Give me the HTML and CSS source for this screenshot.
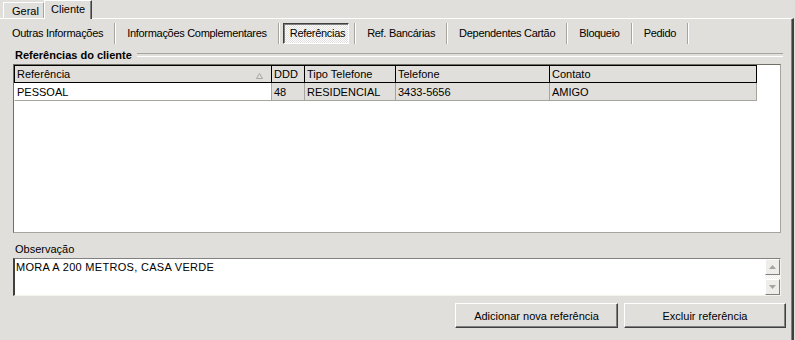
FILE: index.html
```html
<!DOCTYPE html>
<html lang="pt-BR">
<head>
    <meta charset="UTF-8">
    <title>Cliente - Referências</title>
    <link rel="stylesheet" href="styles.css">
</head>
<body>
    <div class="window">
        <div class="top-tabs">
            <div class="ttab">Geral</div>
            <div class="ttab active">Cliente</div>
        </div>

        <div class="page">
            <div class="sub-tabs">
                <div class="stab">Outras Informações</div>
                <span class="sep"></span>
                <div class="stab">Informações Complementares</div>
                <span class="sep"></span>
                <div class="stab selected">Referências</div>
                <span class="sep"></span>
                <div class="stab">Ref. Bancárias</div>
                <span class="sep"></span>
                <div class="stab">Dependentes Cartão</div>
                <span class="sep"></span>
                <div class="stab">Bloqueio</div>
                <span class="sep"></span>
                <div class="stab">Pedido</div>
                <span class="sep"></span>
            </div>

            <div class="group-title">Referências do cliente</div>

            <div class="grid">
                <table class="grid-table">
                    <thead>
                        <tr>
                            <th class="col-ref">
                                Referência
                                <svg class="sort-arrow" width="7" height="6" viewBox="0 0 7 6">
                                    <path d="M3.5 0.5 L6.5 5.5 L0.5 5.5 Z" fill="none" stroke="#a8a69e" stroke-width="1"/>
                                </svg>
                            </th>
                            <th class="col-ddd">DDD</th>
                            <th class="col-tipo">Tipo Telefone</th>
                            <th class="col-fone">Telefone</th>
                            <th class="col-contato">Contato</th>
                        </tr>
                    </thead>
                    <tbody>
                        <tr class="row-selected">
                            <td class="focused">PESSOAL</td>
                            <td>48</td>
                            <td>RESIDENCIAL</td>
                            <td>3433-5656</td>
                            <td>AMIGO</td>
                        </tr>
                    </tbody>
                </table>
            </div>

            <div class="field-label">Observação</div>
            <div class="memo">
                <div class="memo-text">MORA A 200 METROS, CASA VERDE</div>
                <div class="scrollbar">
                    <div class="scroll-btn">
                        <svg width="7" height="4" viewBox="0 0 7 4"><path d="M3.5 0 L7 4 L0 4 Z" fill="#a6a49c"/></svg>
                    </div>
                    <div class="scroll-btn">
                        <svg width="7" height="4" viewBox="0 0 7 4"><path d="M0 0 L7 0 L3.5 4 Z" fill="#a6a49c"/></svg>
                    </div>
                </div>
            </div>

            <div class="actions">
                <button class="btn btn-add">Adicionar nova referência</button>
                <button class="btn btn-del">Excluir referência</button>
            </div>
        </div>
    </div>
</body>
</html>
```

FILE: styles.css
```css
* {
    margin: 0;
    padding: 0;
    box-sizing: border-box;
}

body {
    font-family: "Liberation Sans", Arial, sans-serif;
    font-size: 11px;
    color: #000;
    background: #e0dfdb;
}

.window {
    width: 795px;
    height: 340px;
    background: #e0dfdb;
    overflow: hidden;
}

/* top page control */
.top-tabs {
    display: flex;
    height: 18px;
    padding-left: 3px;
    align-items: flex-end;
}

.ttab {
    height: 16px;
    line-height: 16px;
    width: 41px;
    padding-left: 8px;
    border-left: 1px solid #fff;
    border-top: 1px solid #fff;
    border-right: 1px solid #a6a49c;
}

.ttab.active {
    position: relative;
    z-index: 1;
    height: 19px;
    margin-bottom: -1px;
    line-height: 17px;
    width: 48px;
    padding-left: 6px;
    background: #e0dfdb;
    border-right: 1px solid #404040;
    box-shadow: inset -1px 0 0 #808080;
}

.page {
    height: 322px;
    border-top: 1px solid #fff;
    border-right: 2px solid #404040;
    box-shadow: inset -1px 0 0 #808080;
    width: 794px;
    padding-top: 3px;
}

/* flat button tabs */
.sub-tabs {
    display: flex;
    align-items: center;
    height: 22px;
    padding-left: 4px;
}

.stab {
    height: 21px;
    line-height: 19px;
    padding: 0 7px;
    border: 1px solid transparent;
    letter-spacing: -0.3px;
    white-space: nowrap;
}

.stab.selected {
    padding: 0 3px 0 6px;
    border-color: #404040 #fff #fff #404040;
    box-shadow: inset 1px 1px 0 #808080;
    background: repeating-conic-gradient(#fff 0 25%, #e0dfdb 0 50%) 0 0 / 2px 2px;
}

.sep {
    width: 2px;
    height: 21px;
    margin: 0 3px;
    border-left: 1px solid #a6a49c;
    border-right: 1px solid #fff;
}

.stab.selected + .sep {
    margin-left: 5px;
}

/* group box */
.group-title {
    display: flex;
    align-items: center;
    height: 14px;
    margin-top: 4px;
    padding: 0 9px 0 15px;
    font-weight: bold;
}

.group-title::after {
    content: "";
    flex: 1;
    height: 2px;
    margin-left: 5px;
    border-top: 1px solid #a6a49c;
    border-bottom: 1px solid #fff;
}

/* grid */
.grid {
    width: 768px;
    height: 169px;
    margin: 2px 0 0 13px;
    background: #fff;
    border: 1px solid #a6a49c;
    border-top-color: #716f64;
    border-left-color: #716f64;
}

.grid-table {
    border-collapse: separate;
    border-spacing: 0;
    table-layout: fixed;
    width: 743px;
}

.grid-table th {
    height: 18px;
    padding: 0 2px;
    font-weight: normal;
    text-align: left;
    background: #e0dfdb;
    border-top: 1px solid #000;
    border-bottom: 1px solid #000;
    border-right: 1px solid #000;
    white-space: nowrap;
}

.grid-table th.col-ref {
    border-left: 1px solid #000;
}

.col-ref { width: 258px; }
.col-ddd { width: 33px; }
.col-tipo { width: 91px; }
.col-fone { width: 154px; }
.col-contato { width: 207px; }

.sort-arrow {
    float: right;
    margin: 5px 6px 0 0;
}

.grid-table td {
    height: 18px;
    padding: 0 2px;
    background: #e0dfdb;
    border-right: 1px solid #a6a49c;
    border-bottom: 1px solid #a6a49c;
    white-space: nowrap;
}

.grid-table td.focused {
    background: #fff;
    border-left: 1px solid #fff;
}

/* memo */
.field-label {
    height: 13px;
    line-height: 13px;
    margin: 10px 0 0 15px;
}

.memo {
    display: flex;
    width: 768px;
    height: 38px;
    margin: 2px 0 0 13px;
    background: #fff;
    border-top: 1px solid #808080;
    border-left: 2px solid #404040;
    border-right: 1px solid #f4f3ee;
    border-bottom: 1px solid #f4f3ee;
}

.memo-text {
    flex: 1;
    padding: 2px 0 0 1px;
    line-height: 13px;
    letter-spacing: 0.3px;
}

.scrollbar {
    width: 15px;
    display: flex;
    flex-direction: column;
    justify-content: space-between;
    background: repeating-conic-gradient(#fff 0 25%, #eeede8 0 50%) 0 0 / 2px 2px;
}

.scroll-btn {
    height: 16px;
    display: flex;
    align-items: center;
    justify-content: center;
    background: #eeede9;
    border: 1px solid;
    border-color: #fff #808080 #808080 #fff;
}

/* buttons */
.actions {
    display: flex;
    justify-content: flex-end;
    gap: 6px;
    margin-top: 7px;
    padding-right: 6px;
}

.btn {
    height: 25px;
    font-family: inherit;
    font-size: 11px;
    background: #e0dfdb;
    border: 1px solid;
    border-color: #fff #404040 #404040 #fff;
    box-shadow: inset -1px -1px 0 #808080;
    color: #000;
}

.btn-add { width: 163px; }
.btn-del { width: 162px; }
```
